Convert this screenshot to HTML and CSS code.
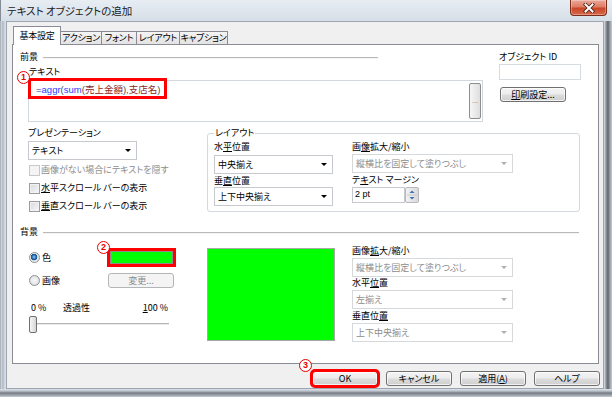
FILE: index.html
```html
<!DOCTYPE html>
<html lang="ja">
<head>
<meta charset="utf-8">
<title>テキスト オブジェクトの追加</title>
<link rel="stylesheet" href="styles.css">
</head>
<body>
<div class="window">
  <div class="titlebar">
    <span class="title">テキスト オブジェクトの追加</span>
    <span class="close"><svg width="12" height="10" viewBox="0 0 12 10"><path d="M2.5 1.5 L9.5 8.5 M9.5 1.5 L2.5 8.5" stroke="#4a1f14" stroke-width="3.6" stroke-linecap="square"/><path d="M2.5 1.5 L9.5 8.5 M9.5 1.5 L2.5 8.5" stroke="#fff" stroke-width="2" stroke-linecap="square"/></svg></span>
  </div>
  <div class="client">
    <div class="tabs">
      <div class="tab active">基本設定</div>
      <div class="tab t-action">アクション</div>
      <div class="tab t-font">フォント</div>
      <div class="tab t-layout">レイアウト</div>
      <div class="tab t-caption">キャプション</div>
    </div>
    <div class="panel">
      <div class="fg">
        <div class="fg-main">
          <div class="sec-head fg-head"><span>前景</span><span class="rule"></span></div>
          <div class="lbl text-lbl">テキスト</div>
          <div class="textbox">
            <span class="hl"><span class="op">=</span><span class="fn">aggr</span><span class="par">(</span><span class="fn">sum</span><span class="par">(</span><span class="fld">売上金額</span><span class="par">),</span><span class="fld">支店名</span><span class="par">)</span></span>
            <span class="dots-btn">...</span>
          </div>
        </div>
        <div class="fg-side">
          <div class="lbl id-lbl">オブジェクト ID</div>
          <div class="id-input"></div>
          <div class="btn print-btn"><span><u>印</u>刷設定...</span></div>
        </div>
      </div>

      <div class="mid">
        <div class="pres">
          <div class="lbl pres-lbl">プレゼンテーション</div>
          <div class="select pres-select">テキスト</div>
          <div class="check disabled first"><span class="cb"></span>画像がない場合にテキストを隠す</div>
          <div class="check"><span class="cb"></span><u>水</u>平スクロール バーの表示</div>
          <div class="check"><span class="cb"></span><u>垂</u>直スクロール バーの表示</div>
        </div>
        <fieldset class="group">
          <legend>レイアウト</legend>
          <div class="group-cols">
            <div class="col-a">
              <div class="lbl l1">水<u>平</u>位置</div>
              <div class="select s1">中央揃え</div>
              <div class="lbl l2">垂<u>直</u>位置</div>
              <div class="select s2">上下中央揃え</div>
            </div>
            <div class="col-b">
              <div class="lbl l1">画<u>像</u>拡大/縮小</div>
              <div class="select disabled s1b">縦横比を固定して塗りつぶし</div>
              <div class="lbl l2b">テ<u>キ</u>スト マージン</div>
              <div class="spin">
                <span class="spin-field">2 pt</span>
                <span class="spin-btns"><svg width="12" height="14" viewBox="0 0 12 14"><path d="M3.5 5 L6 2.5 L8.5 5 Z" fill="#3d6fb6"/><path d="M3.5 9 L6 11.5 L8.5 9 Z" fill="#3d6fb6"/><path d="M1 7 H11" stroke="#c4c8cc" stroke-width="1"/></svg></span>
              </div>
            </div>
          </div>
        </fieldset>
      </div>

      <div class="sec-head bg-head"><span>背景</span><span class="rule"></span></div>
      <div class="bg">
        <div class="bg-left">
          <div class="opt-row">
            <span class="opt"><span class="radio checked"></span>色</span>
            <span class="color-btn"><span class="swatch"></span></span>
          </div>
          <div class="opt-row row2">
            <span class="opt"><span class="radio"></span>画像</span>
            <span class="btn disabled change-btn">変更...</span>
          </div>
          <div class="scale"><span class="s0">0 %</span><span class="s-mid">透過性</span><span class="s100"><u>1</u>00 %</span></div>
          <div class="slider"><span class="thumb"></span></div>
        </div>
        <div class="preview"></div>
        <div class="bg-right">
          <div class="lbl">画像<u>拡</u>大/縮小</div>
          <div class="select disabled r-sel">縦横比を固定して塗りつぶし</div>
          <div class="lbl">水平<u>位</u>置</div>
          <div class="select disabled r-sel">左揃え</div>
          <div class="lbl r-l3">垂直位<u>置</u></div>
          <div class="select disabled r-sel">上下中央揃え</div>
        </div>
      </div>
      <span class="mark m1">1</span>
      <span class="mark m2">2</span>
    </div>
    <div class="actions">
      <div class="btn ok">OK</div>
      <div class="btn">キャンセル</div>
      <div class="btn">適用(<u>A</u>)</div>
      <div class="btn">ヘルプ</div>
    </div>
    <span class="mark m3">3</span>
  </div>
</div>
</body>
</html>
```
FILE: styles.css
```css
* { box-sizing: border-box; }
html, body { margin: 0; padding: 0; }
body {
  width: 612px;
  height: 397px;
  overflow: hidden;
  font-family: "Noto Sans CJK JP", "Noto Sans", sans-serif;
  font-size: 9px;
  line-height: 12px;
  color: #000;
  font-feature-settings: "palt";
  background: #cfd7e0;
}
u { text-decoration: underline; text-underline-offset: 1px; }

.window {
  width: 612px;
  height: 397px;
  display: flex;
  flex-direction: column;
  background:
    linear-gradient(to bottom, rgba(0,0,0,0) 389px, #dde3e9 389px, #bcc3cb 391px, #747b83 393px, #9aa1a9 395px, #c4cbd2 397px),
    linear-gradient(to right, #858c93 0, #d6dde4 1px, #aeb6bf 3px, #dde3ea 5px, #cfd7e0 6px, #cfd7e0 603px, #dfe5eb 604px, #8f969e 606px, #5f666e 608px, #9aa1a9 610px, #c5ccd3 612px);
}

.titlebar {
  height: 21px;
  flex: none;
  display: flex;
  align-items: flex-start;
  background: linear-gradient(#e7edf3, #d6dee7);
  border-left: 1px solid #858c93;
}
.title {
  font-size: 10.5px;
  line-height: 22px;
  padding-left: 6px;
  color: #1b1b1b;
}
.close {
  margin-left: auto;
  margin-right: 5px;
  width: 37px;
  height: 16px;
  border: 1px solid #7c2d1e;
  border-top: 0;
  border-radius: 0 0 4px 4px;
  background: linear-gradient(#eaa999 0%, #de7d64 45%, #c94629 55%, #d8694a 100%);
  box-shadow: inset 0 0 0 1px rgba(255,255,255,0.3);
  display: flex;
  align-items: center;
  justify-content: center;
}

.client {
  flex: none;
  position: relative;
  width: 598px;
  height: 368px;
  margin-left: 6px;
  border: 1px solid #9ba6b2;
  background: #f0f0f0;
  padding: 4px 4px 0 5px;
}

.tabs {
  display: flex;
  align-items: flex-end;
  height: 18px;
  padding-left: 1px;
}
.tab {
  height: 13px;
  border: 1px solid #898c95;
  border-bottom: 0;
  background: linear-gradient(#f4f4f4, #e3e3e3);
  text-align: center;
  line-height: 12px;
  margin-left: -1px;
  white-space: nowrap;
  letter-spacing: -0.2px;
}
.tab.active {
  width: 48px;
  height: 19px;
  margin-left: 0;
  margin-bottom: -1px;
  padding-top: 3px;
  background: #fff;
  position: relative;
  z-index: 1;
  line-height: 12px;
}
.t-action { width: 42px; }
.t-font { width: 36px; }
.t-layout { width: 44px; }
.t-caption { width: 49px; }

.panel {
  position: relative;
  width: 587px;
  height: 320px;
  border: 1px solid #898c95;
  background: #fff;
}

.lbl { height: 12px; white-space: nowrap; }

.sec-head {
  display: flex;
  align-items: center;
  height: 12px;
}
.sec-head .rule {
  flex: 1;
  height: 1px;
  margin-left: 5px;
  background: #b9b9b9;
  box-shadow: 0 1px 0 #f4f4f4;
}

.fg { display: flex; align-items: flex-start; }
.fg-main { margin-left: 7px; width: 463px; }
.fg-head { margin-top: 6px; width: 358px; }
.text-lbl { margin: 3px 0 0 9px; }
.textbox {
  margin: 2px 0 0 8px;
  width: 455px;
  height: 42px;
  border: 1px solid #d3d8de;
  display: flex;
  align-items: flex-start;
}
.hl {
  display: inline-block;
  margin: -3px 0 0 -1px;
  height: 21px;
  border: 3px solid #ff0000;
  padding: 1px 4px 0 5px;
  line-height: 14px;
  font-family: "Liberation Sans", "Noto Sans CJK JP", sans-serif;
  font-size: 9.5px;
  white-space: nowrap;
}
.op { color: #1a2a8a; }
.fn { color: #2b3cff; }
.par { color: #505050; }
.fld { color: #8c2525; font-family: "Noto Sans CJK JP", sans-serif; font-size: 9.5px; }
.dots-btn {
  margin: 2px 1px 0 auto;
  width: 12px;
  height: 36px;
  border: 1px solid #8d8d8d;
  border-radius: 2px;
  background: linear-gradient(to right, #f6f6f6, #dedede);
  font-family: "Liberation Sans", sans-serif;
  font-size: 7px;
  line-height: 8px;
  color: #777;
  display: flex;
  align-items: center;
  justify-content: center;
}

.fg-side { margin-left: 16px; width: 82px; }
.id-lbl { margin-top: 6px; }
.id-input {
  margin-top: 1px;
  height: 16px;
  border: 1px solid #d6dbe0;
  background: #fff;
}
.print-btn { margin: 7px 0 0 1px; width: 79px; }

.btn {
  width: 66px;
  height: 15px;
  border: 1px solid #707070;
  border-radius: 3px;
  background: linear-gradient(#f4f4f4 0%, #ececec 48%, #dcdcdc 52%, #cfcfcf 100%);
  box-shadow: inset 0 0 0 1px rgba(255,255,255,0.7);
  display: flex;
  align-items: center;
  justify-content: center;
  line-height: 12px;
  white-space: nowrap;
}
.btn.disabled {
  border-color: #b2b6b9;
  background: #f4f4f4;
  box-shadow: none;
  color: #8a8a8a;
}

.select {
  display: flex;
  align-items: center;
  height: 19px;
  border: 1px solid #c6c9cd;
  background: #fff;
  padding-left: 3px;
  white-space: nowrap;
}
.select::after {
  content: "";
  margin-left: auto;
  margin-right: 5px;
  width: 0;
  height: 0;
  border-left: 3px solid transparent;
  border-right: 3px solid transparent;
  border-top: 3px solid #000;
}
.select.disabled { color: #8c8c8c; border-color: #d6d9dc; }
.select.disabled::after { border-top-color: #b0b0b0; }

.mid { display: flex; align-items: flex-start; }
.pres { margin-left: 15px; width: 170px; }
.pres-lbl { margin-top: 5px; }
.pres-select { margin-top: 2px; width: 109px; }
.check {
  display: flex;
  align-items: center;
  height: 18px;
  white-space: nowrap;
}
.check.first { margin-top: 1px; }
.cb {
  width: 11px;
  height: 11px;
  margin: 0 1px 0 1px;
  border: 1px solid #9c9c9c;
  background: linear-gradient(135deg, #d6d8db, #f8f8f8);
  box-shadow: inset 0 0 0 1px #f2f2f2;
}
.check.disabled { color: #8d8d8d; }
.check.disabled .cb { border-color: #c8c8c8; background: #f4f4f4; box-shadow: none; }

.group {
  margin: 5px 0 0 9px;
  width: 373px;
  border: 1px solid #d3d9df;
  border-radius: 3px;
  padding: 0 0 5px 6px;
  min-width: 0;
}
.group legend {
  padding: 0 1px;
  font-size: 9px;
  line-height: 12px;
}
.group-cols { display: flex; align-items: flex-start; }
.col-a { width: 119px; }
.col-b { margin-left: 19px; width: 161px; }
.l1 { margin-top: 2px; }
.s1 { margin-top: 2px; }
.l2 { margin-top: 1px; }
.s1b { margin-top: 1px; }
.l2b { margin-top: 1px; }
.spin { display: flex; margin-top: 1px; height: 16px; width: 67px; }
.spin-field {
  width: 53px;
  border: 1px solid #c6c9cd;
  background: #fff;
  padding-left: 2px;
  line-height: 12px;
  font-family: "Liberation Sans", sans-serif;
}
.spin-btns {
  width: 14px;
  border: 1px solid #b6babe;
  border-radius: 2px;
  background: linear-gradient(to right, #f2f2f2, #d9d9d9);
  display: flex;
}

.bg-head { margin: 11px 0 0 7px; width: 559px; }
.bg { display: flex; align-items: flex-start; margin-top: 7px; }
.bg-left { margin-left: 16px; width: 147px; padding-top: 3px; }
.opt-row {
  display: flex;
  align-items: center;
  justify-content: space-between;
  height: 19px;
}
.opt { display: flex; align-items: center; }
.radio {
  width: 11px;
  height: 11px;
  margin-right: 2px;
  border: 1px solid #8f8f8f;
  border-radius: 50%;
  background: radial-gradient(circle at 50% 50%, #f9f9f9 0, #d6d8db 100%);
}
.radio.checked {
  background: radial-gradient(circle at 45% 45%, #8fcaf4 0, #2a6fb3 2px, #1b4f86 3px, #e8edf2 3.6px, #dfe2e6 100%);
}
.color-btn {
  width: 69px;
  height: 19px;
  border: 3px solid #ff0000;
}
.swatch {
  display: block;
  width: 100%;
  height: 100%;
  border: 1px solid #8c8c8c;
  background: #00ff00;
}
.row2 { margin-top: 6px; height: 15px; }
.change-btn { margin-right: 2px; }
.scale {
  display: flex;
  margin-top: 14px;
  height: 12px;
  white-space: nowrap;
}
.s0 { margin-left: 2px; width: 32px; }
.s-mid { flex: 1; }
.s100 { padding-right: 8px; }
.slider {
  margin-top: 2px;
  width: 140px;
  height: 17px;
  background: linear-gradient(to bottom, rgba(0,0,0,0) 7px, #b4b4b4 7px, #b4b4b4 8px, #e9e9e9 8px, #e9e9e9 9px, rgba(0,0,0,0) 9px);
}
.thumb {
  display: block;
  width: 8px;
  height: 17px;
  border: 1px solid #707070;
  border-radius: 2px;
  background: linear-gradient(to right, #f6f6f6, #d6d6d6);
}
.preview {
  margin: 3px 0 0 31px;
  width: 128px;
  height: 93px;
  border: 1px solid #a8a8a8;
  background: #00ff00;
}
.bg-right { margin-left: 17px; width: 161px; }
.r-sel { margin-top: 1px; }
.r-l3 { margin-top: 1px; }

.actions {
  display: flex;
  justify-content: flex-end;
  gap: 8px;
  margin-top: 7px;
  margin-right: -1px;
}
.ok { outline: 3px solid #ff0000; outline-offset: -1px; }

.mark {
  position: absolute;
  width: 13px;
  height: 13px;
  border-radius: 50%;
  border: 1.5px solid #e60000;
  background: #fff;
  color: #e60000;
  font-family: "Liberation Sans", sans-serif;
  font-weight: bold;
  font-size: 9px;
  line-height: 10px;
  text-align: center;
}
.m1 { left: 4px; top: 26px; }
.m2 { left: 84px; top: 196px; }
.m3 { left: 292px; top: 337px; }
```
